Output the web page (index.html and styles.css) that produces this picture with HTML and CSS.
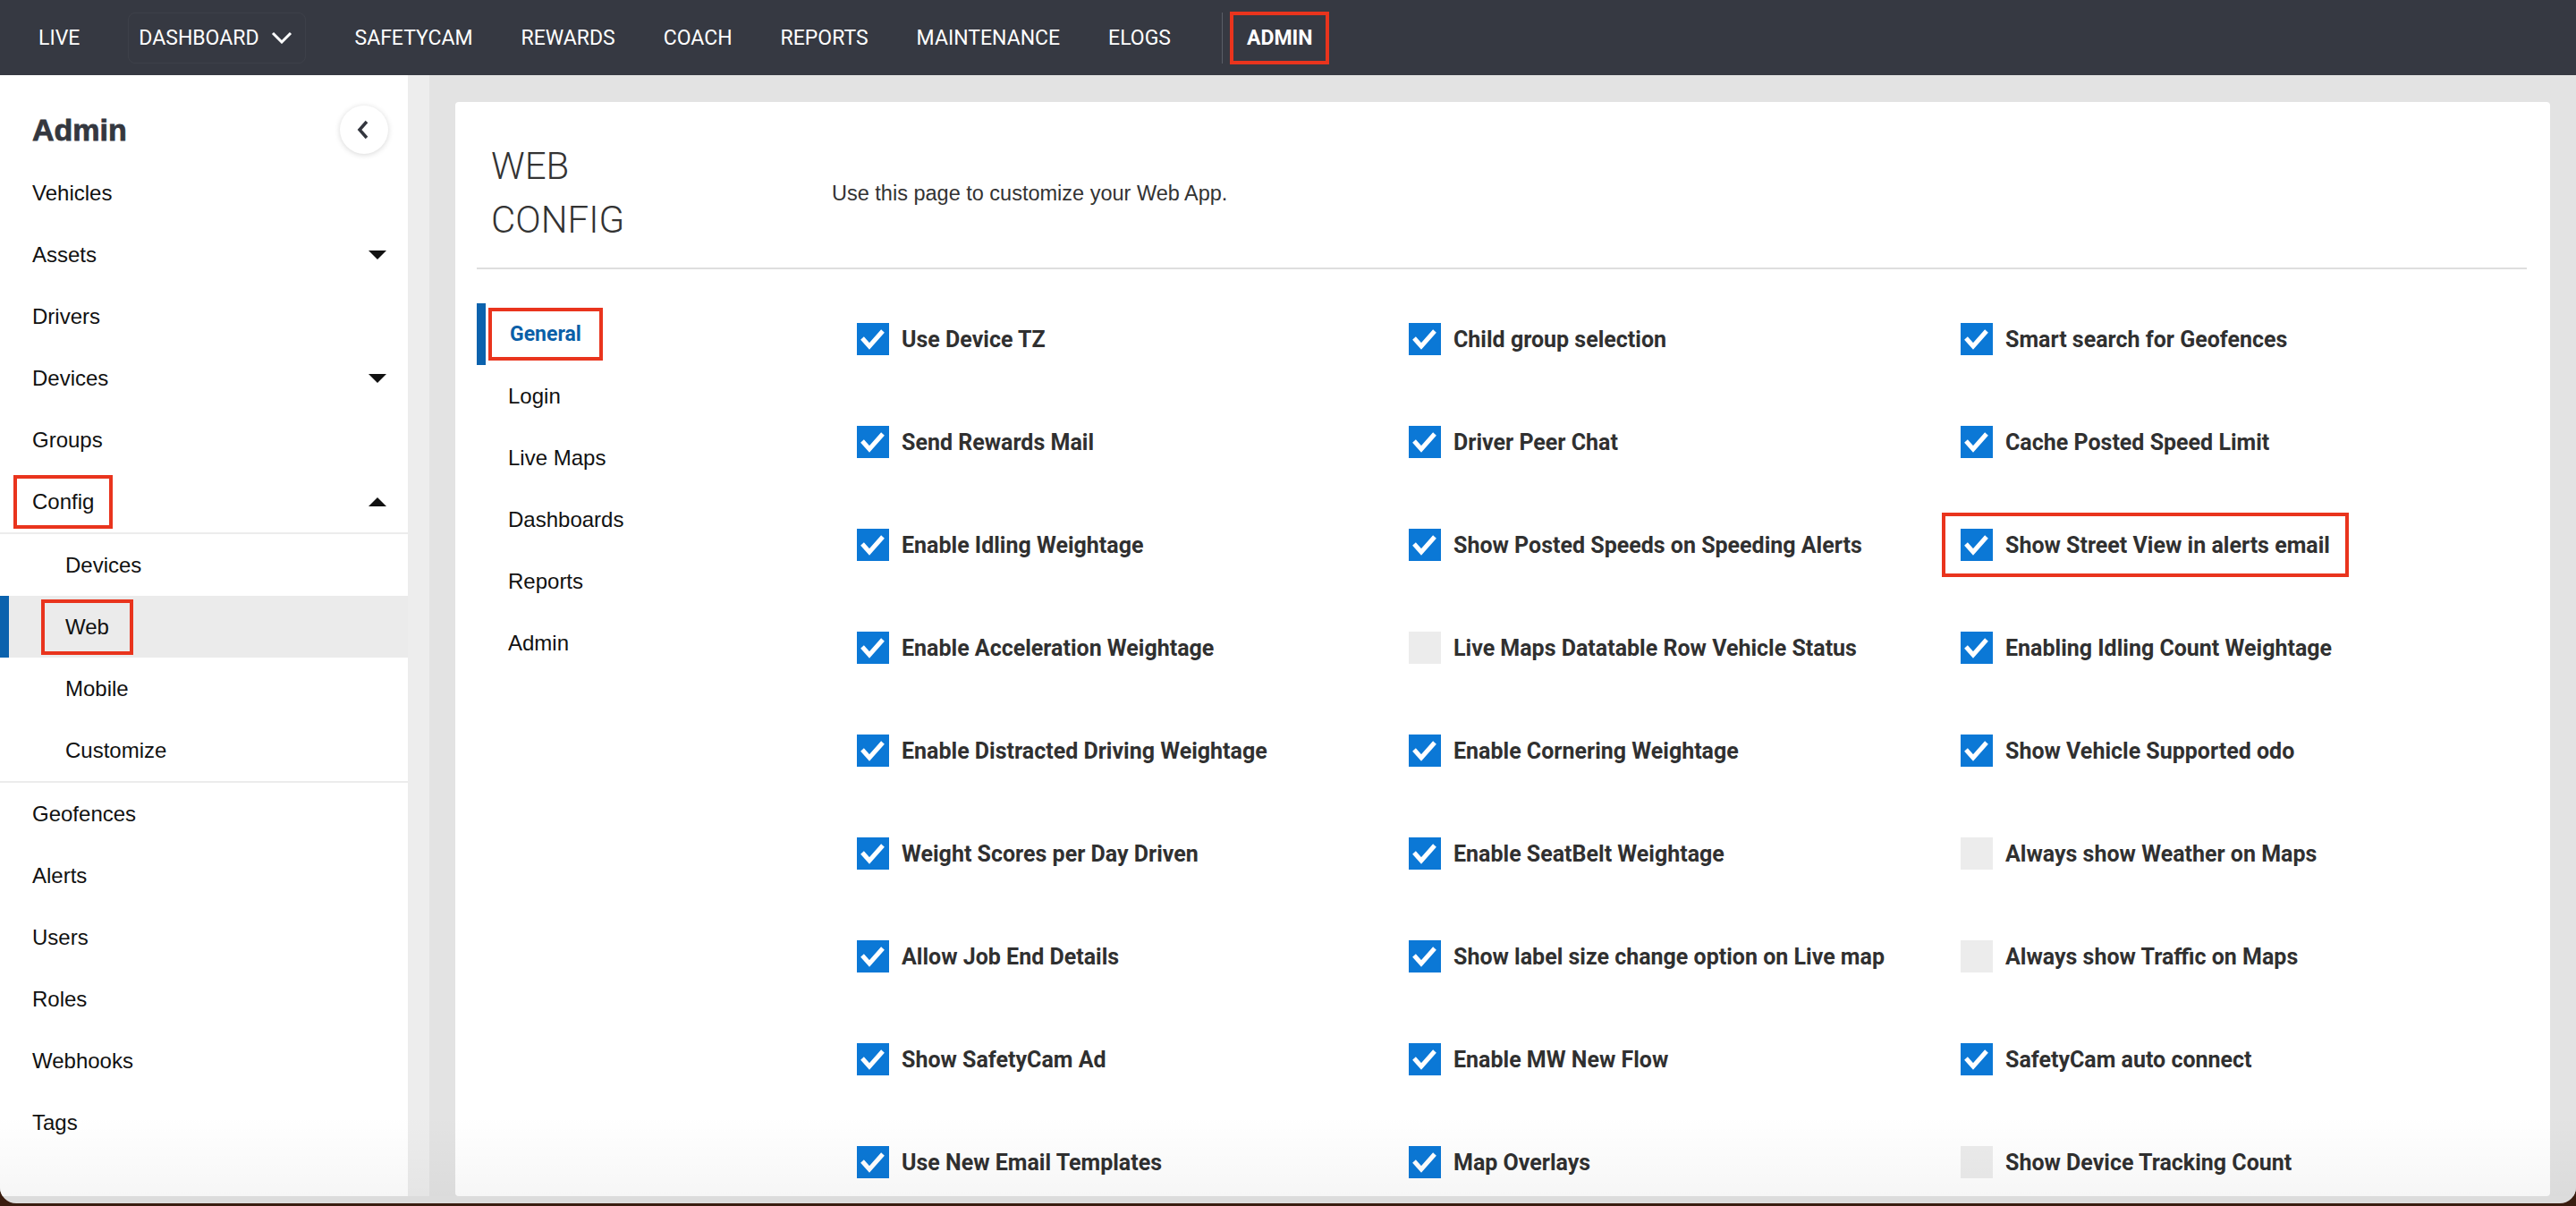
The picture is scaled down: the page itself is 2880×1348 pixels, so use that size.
FILE: index.html
```html
<!DOCTYPE html>
<html lang="en">

<head>
    <meta charset="UTF-8">
    <meta name="viewport" content="width=device-width, initial-scale=1.0">
    <title>Web Config</title>
    <link rel="stylesheet" href="styles.css">
</head>

<body>

    <div class="window">
        <div class="app">
            <nav class="topnav">
                <a class="nav-link">LIVE</a>
                <a class="nav-link nav-drop">DASHBOARD
                    <svg width="24" height="14" viewBox="0 0 24 14"><path d="M2 2l10 10L22 2" fill="none" stroke="#fff" stroke-width="3"/></svg>
                </a>
                <a class="nav-link">SAFETYCAM</a>
                <a class="nav-link">REWARDS</a>
                <a class="nav-link">COACH</a>
                <a class="nav-link">REPORTS</a>
                <a class="nav-link">MAINTENANCE</a>
                <a class="nav-link">ELOGS</a>
                <span class="nav-divider"></span>
                <a class="nav-link nav-admin"><span class="mark">ADMIN</span></a>
            </nav>

            <div class="layout">
                <aside class="sidebar">
                    <div class="side-head">
                        <h2>Admin</h2>
                        <button class="back-btn">
                            <svg width="14" height="22" viewBox="0 0 14 22"><path d="M11 2L3 11l8 9" fill="none" stroke="#33363e" stroke-width="3.5"/></svg>
                        </button>
                    </div>
                    <a class="side-link">Vehicles</a>
                    <a class="side-link">Assets <span class="caret"></span></a>
                    <a class="side-link">Drivers</a>
                    <a class="side-link">Devices <span class="caret"></span></a>
                    <a class="side-link">Groups</a>
                    <a class="side-link"><span class="mark mark-config">Config</span> <span class="caret up"></span></a>
                    <div class="submenu">
                        <a class="side-link sub-link">Devices</a>
                        <a class="side-link sub-link current"><span class="mark mark-web">Web</span></a>
                        <a class="side-link sub-link">Mobile</a>
                        <a class="side-link sub-link">Customize</a>
                    </div>
                    <a class="side-link">Geofences</a>
                    <a class="side-link">Alerts</a>
                    <a class="side-link">Users</a>
                    <a class="side-link">Roles</a>
                    <a class="side-link">Webhooks</a>
                    <a class="side-link">Tags</a>
                </aside>

                <main class="main">
                    <div class="card">
                        <div class="card-head">
                            <h1>WEB<br>CONFIG</h1>
                            <p class="intro">Use this page to customize your Web App.</p>
                        </div>

                        <div class="card-body">
                            <ul class="tabs">
                                <li class="tab active"><span class="mark mark-tab">General</span></li>
                                <li class="tab">Login</li>
                                <li class="tab">Live Maps</li>
                                <li class="tab">Dashboards</li>
                                <li class="tab">Reports</li>
                                <li class="tab">Admin</li>
                            </ul>

                            <div class="options" id="options"></div>
                        </div>
                    </div>
                </main>
            </div>
        </div>
    </div>

    <script>
        // rows of the settings grid, left to right
        const options = [
            ['Use Device TZ', 1], ['Child group selection', 1], ['Smart search for Geofences', 1],
            ['Send Rewards Mail', 1], ['Driver Peer Chat', 1], ['Cache Posted Speed Limit', 1],
            ['Enable Idling Weightage', 1], ['Show Posted Speeds on Speeding Alerts', 1], ['Show Street View in alerts email', 1, 'marked'],
            ['Enable Acceleration Weightage', 1], ['Live Maps Datatable Row Vehicle Status', 0], ['Enabling Idling Count Weightage', 1],
            ['Enable Distracted Driving Weightage', 1], ['Enable Cornering Weightage', 1], ['Show Vehicle Supported odo', 1],
            ['Weight Scores per Day Driven', 1], ['Enable SeatBelt Weightage', 1], ['Always show Weather on Maps', 0],
            ['Allow Job End Details', 1], ['Show label size change option on Live map', 1], ['Always show Traffic on Maps', 0],
            ['Show SafetyCam Ad', 1], ['Enable MW New Flow', 1], ['SafetyCam auto connect', 1],
            ['Use New Email Templates', 1], ['Map Overlays', 1], ['Show Device Tracking Count', 0]
        ];

        const tick = '<svg width="36" height="36" viewBox="0 0 36 36"><path d="M6 17l8 9L29 9" fill="none" stroke="#fff" stroke-width="5"/></svg>';
        let list = document.getElementById('options');

        options.forEach(opt => {
            let div = document.createElement('div');
            div.className = 'option' + (opt[2] ? ' ' + opt[2] : '');
            div.innerHTML = `<span class="box ${opt[1] ? 'on' : 'off'}">${opt[1] ? tick : ''}</span><span>${opt[0]}</span>`;
            list.appendChild(div);
        });
    </script>

</body>

</html>
```

FILE: styles.css
```css
body {
    margin: 0;
    background: #3a1d10;
    font-family: "Liberation Sans", Arial, sans-serif;
}

.window {
    position: relative;
    height: 1345px;
    overflow: hidden;
    background: #dcdcdc;
    border-radius: 0 0 18px 18px;
}

.window::after {
    content: '';
    position: absolute;
    left: 0;
    right: 0;
    bottom: 8px;
    height: 90px;
    background: linear-gradient(rgba(0, 0, 0, 0), rgba(0, 0, 0, 0.035));
    pointer-events: none;
}

.app {
    height: 1337px;
    display: flex;
    flex-direction: column;
    overflow: hidden;
}

/* top bar */
.topnav {
    height: 84px;
    flex-shrink: 0;
    display: flex;
    align-items: center;
    padding-left: 43px;
    background: #363942;
    font-family: Roboto, sans-serif;
}

.nav-link {
    color: #fff;
    font-size: 23px;
    margin-right: 54px;
    white-space: nowrap;
}

.nav-drop {
    display: flex;
    align-items: center;
    gap: 14px;
    height: 55px;
    padding: 0 14px 0 11px;
    border: 1px solid rgba(255, 255, 255, 0.04);
    border-radius: 8px;
    margin-right: 54px;
}

.nav-divider {
    width: 1px;
    height: 57px;
    background: #5a5e67;
    margin-left: 3px;
    margin-right: 27px;
}

.nav-admin {
    font-weight: 700;
}

.mark {
    display: inline-block;
    outline: 4px solid #e9341d;
}

.nav-admin .mark {
    padding: 0 3px;
    margin-left: -3px;
    outline-offset: 12px;
}

.layout {
    flex: 1;
    display: flex;
    min-height: 0;
}

/* sidebar */
.sidebar {
    width: 456px;
    flex-shrink: 0;
    background: #fff;
}

.side-head {
    display: flex;
    justify-content: space-between;
    align-items: center;
    padding: 34px 22px 9px 36px;
}

.side-head h2 {
    margin: 0;
    font-size: 34px;
    font-weight: 700;
    color: #34373f;
    -webkit-text-stroke: 0.8px #34373f;
}

.back-btn {
    width: 54px;
    height: 54px;
    border: none;
    border-radius: 50%;
    background: #fff;
    box-shadow: 0 1px 6px rgba(0, 0, 0, 0.16);
    display: flex;
    align-items: center;
    justify-content: center;
    padding: 0 3px 0 0;
}

.side-link {
    height: 69px;
    display: flex;
    align-items: center;
    justify-content: space-between;
    padding: 0 24px 0 36px;
    font-size: 24px;
    color: #111;
}

.caret {
    width: 0;
    height: 0;
    border-left: 10px solid transparent;
    border-right: 10px solid transparent;
    border-top: 10px solid #111;
}

.caret.up {
    border-top: none;
    border-bottom: 10px solid #111;
}

.mark-config {
    padding: 0 5px;
    margin-left: -5px;
    outline-offset: 12px;
}

.submenu {
    border-top: 2px solid #ececec;
    border-bottom: 2px solid #ececec;
}

.sub-link {
    padding-left: 73px;
}

.sub-link.current {
    background: #ebebeb;
    box-shadow: inset 10px 0 #0b62ad;
}

.mark-web {
    padding: 0 10px;
    margin-left: -10px;
    outline-offset: 13px;
}

/* main area */
.main {
    flex: 1;
    min-width: 0;
    padding: 30px 29px 0 53px;
    background: linear-gradient(to right, #ededed 24px, #e3e3e3 24px);
}

.card {
    height: 100%;
    background: #fff;
    border-radius: 4px;
    padding: 0 26px 0 24px;
}

.card-head {
    display: flex;
    align-items: center;
    padding: 42px 0 23px 16px;
    border-bottom: 2px solid #dedede;
}

.card-head h1 {
    width: 381px;
    flex-shrink: 0;
    margin: 0;
    font-family: Roboto, sans-serif;
    font-weight: 300;
    font-size: 42px;
    line-height: 60px;
    color: #333;
}

.intro {
    margin: 0;
    font-size: 23.5px;
    color: #333;
}

.card-body {
    display: flex;
}

.tabs {
    width: 425px;
    flex-shrink: 0;
    list-style: none;
    margin: 0;
    padding: 38px 0 0 0;
}

.tab {
    height: 69px;
    display: flex;
    align-items: center;
    padding-left: 35px;
    font-size: 24px;
    color: #111;
}

.tab.active {
    box-shadow: inset 10px 0 #0b62ad;
    color: #0a5fa8;
    font-family: Roboto, sans-serif;
    font-weight: 700;
    font-size: 23px;
}

.mark-tab {
    padding: 0 8px;
    margin-left: -6px;
    outline-offset: 12px;
}

.options {
    flex: 1;
    display: grid;
    grid-template-columns: repeat(3, 617px);
    row-gap: 79px;
    align-content: start;
    padding-top: 60px;
}

.option {
    display: flex;
    align-items: center;
    gap: 14px;
    height: 36px;
    font-family: Roboto, sans-serif;
    font-weight: 700;
    font-size: 25px;
    color: #303030;
    white-space: nowrap;
}

.option.marked {
    justify-self: start;
    padding: 0 3px;
    margin-left: -3px;
    outline: 4px solid #e9341d;
    outline-offset: 14px;
}

.box {
    width: 36px;
    height: 36px;
    flex-shrink: 0;
}

.box.on {
    background: #0b78d6;
}

.box.off {
    background: #ececec;
}

.box svg {
    display: block;
}
```
